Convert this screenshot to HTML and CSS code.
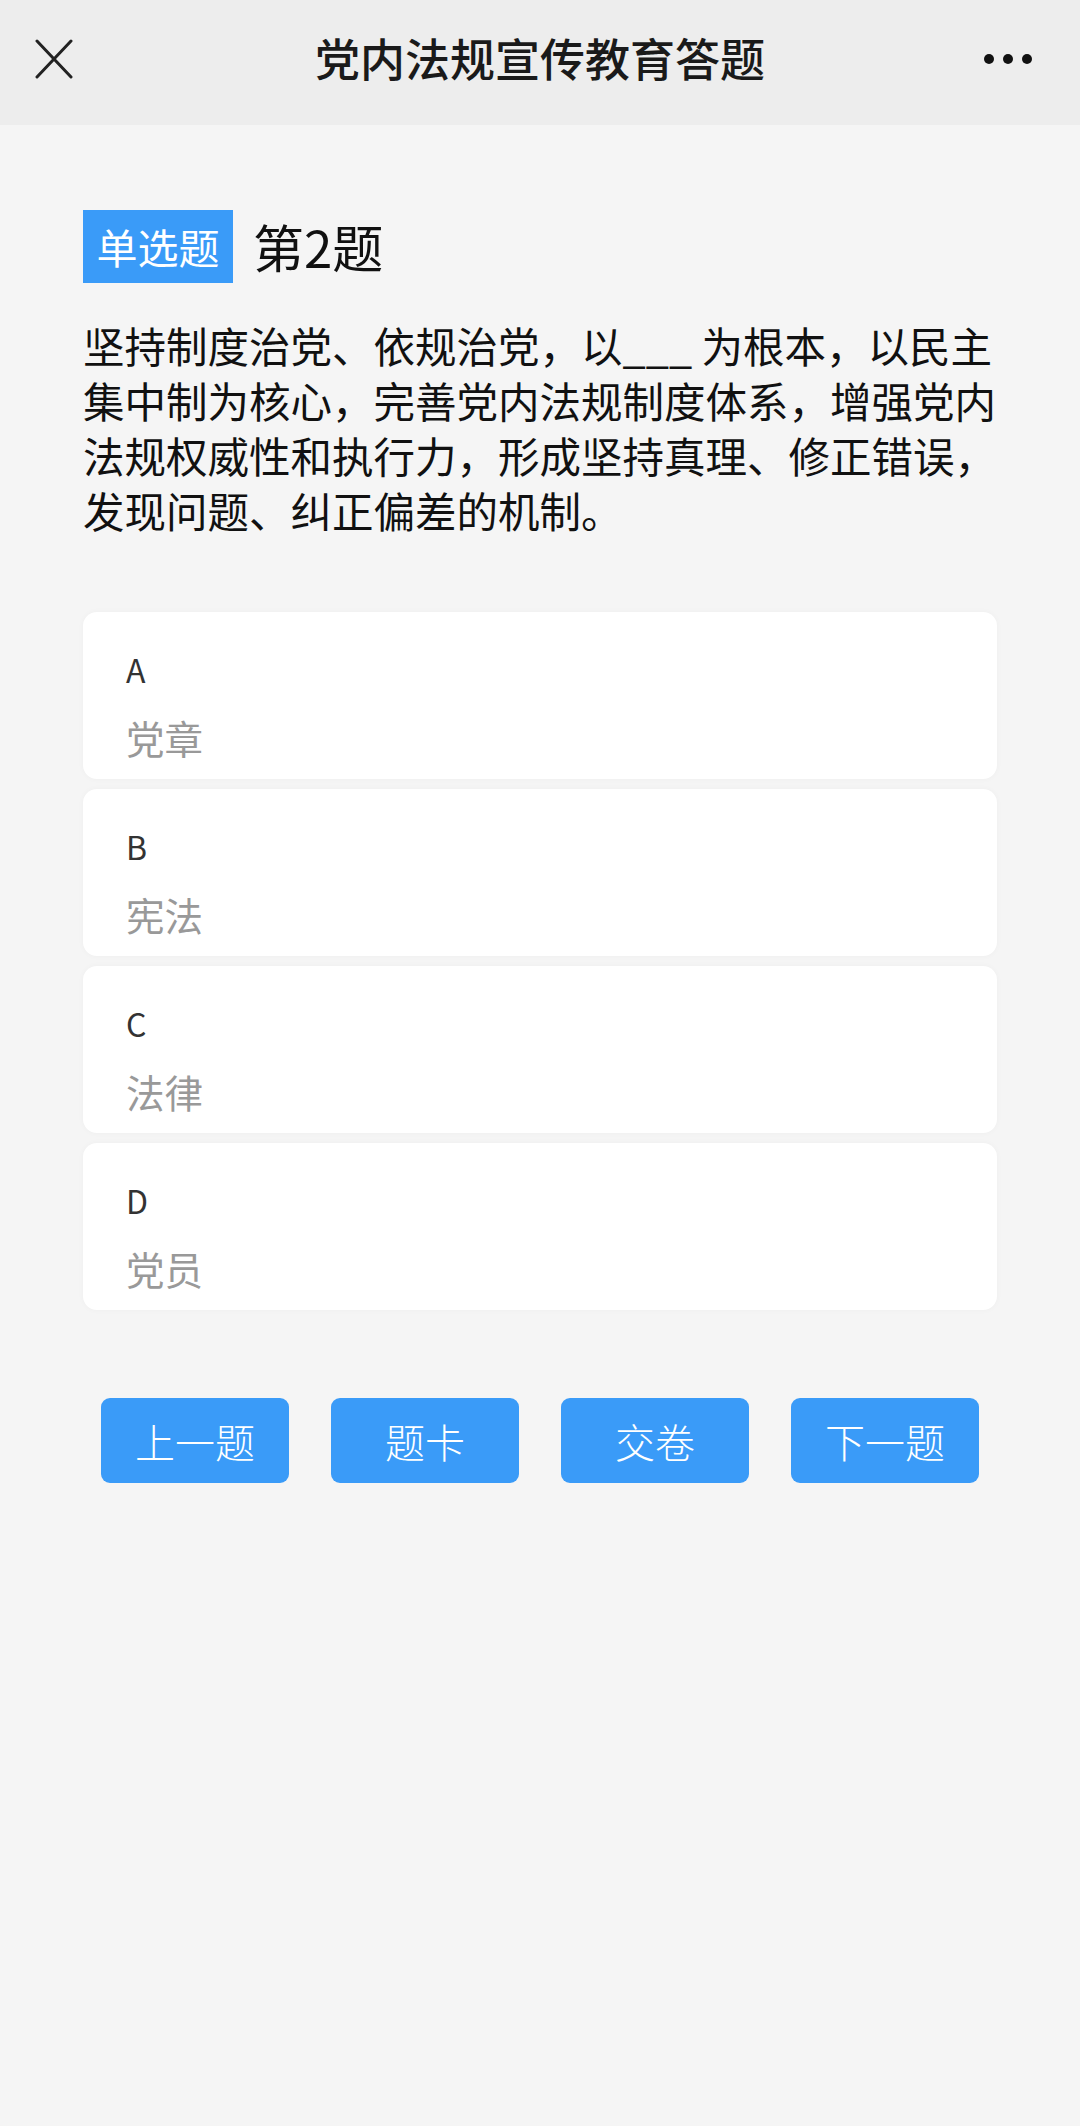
FILE: index.html
```html
<!DOCTYPE html>
<html lang="zh-CN">
<head>
<meta charset="utf-8">
<title>党内法规宣传教育答题</title>
<link rel="stylesheet" href="styles.css">
</head>
<body>
<header class="topbar">
  <div class="close">
    <svg width="40" height="40" viewBox="0 0 40 40"><path d="M3 2 L37 38 M37 2 L3 38" stroke="#222" stroke-width="3" fill="none" stroke-linecap="round"/></svg>
  </div>
  <div class="title">党内法规宣传教育答题</div>
  <div class="more"><span></span><span></span><span></span></div>
</header>
<main class="content">
  <div class="qhead">
    <span class="badge">单选题</span>
    <span class="qno">第2题</span>
  </div>
  <p class="question">坚持制度治党、依规治党，以___ 为根本，以民主集中制为核心，完善党内法规制度体系，增强党内法规权威性和执行力，形成坚持真理、修正错误，发现问题、纠正偏差的机制。</p>
  <div class="options">
    <div class="option"><div class="letter">A</div><div class="text">党章</div></div>
    <div class="option"><div class="letter">B</div><div class="text">宪法</div></div>
    <div class="option"><div class="letter">C</div><div class="text">法律</div></div>
    <div class="option"><div class="letter">D</div><div class="text">党员</div></div>
  </div>
  <div class="actions">
    <button class="btn">上一题</button>
    <button class="btn">题卡</button>
    <button class="btn">交卷</button>
    <button class="btn">下一题</button>
  </div>
</main>
</body>
</html>
```
FILE: styles.css
```css
* { box-sizing: border-box; }
html, body {
  margin: 0;
  padding: 0;
  background: #f5f5f5;
  font-family: "Noto Sans CJK SC", "Noto Sans", sans-serif;
  color: #111;
}
body { width: 1080px; min-height: 2126px; }

.topbar {
  height: 125px;
  background: #ededed;
  display: flex;
  align-items: center;
  justify-content: space-between;
  padding: 0 48px 0 34px;
  position: relative;
}
.close { width: 40px; height: 40px; display: flex; margin-top: -8px; }
.title {
  position: absolute;
  left: 0; right: 0;
  text-align: center;
  font-size: 45px;
  font-weight: 500;
  color: #1a1a1a;
  top: 50%;
  transform: translateY(-58%);
  pointer-events: none;
}
.more { display: flex; gap: 9px; margin-top: -8px; }
.more span {
  width: 10px; height: 10px; border-radius: 50%; background: #111; display: block;
}

.content { padding: 85px 83px 0 83px; }

.qhead { display: flex; align-items: center; }
.badge {
  width: 150px; height: 73px;
  background: #3a9bf8;
  color: #fff;
  font-size: 41px;
  display: flex; align-items: center; justify-content: center;
  line-height: 1;
}
.qno { font-size: 51px; margin-left: 20px; color: #111; line-height: 1; }

.question {
  margin: 35px 0 0 0;
  font-size: 41.5px;
  line-height: 55px;
  color: #111;
  letter-spacing: 0;
}

.options { margin-top: 74px; display: flex; flex-direction: column; gap: 10px; }
.option {
  background: #fff;
  border-radius: 14px;
  height: 167px;
  padding: 37px 43px 0 43px;
  box-shadow: 0 0 6px rgba(0,0,0,0.03);
}
.letter { font-size: 32px; line-height: 40px; color: #333; }
.text { font-size: 38.5px; line-height: 50px; color: #999; margin-top: 23px; }

.actions {
  margin-top: 88px;
  display: flex;
  justify-content: center;
  gap: 42px;
}
.btn {
  width: 188px; height: 85px;
  border: none;
  border-radius: 9px;
  background: #3a9bf8;
  color: #fff;
  font-family: "Noto Sans CJK SC", sans-serif;
  font-size: 40px;
  font-weight: 300;
  padding: 0;
}
```
